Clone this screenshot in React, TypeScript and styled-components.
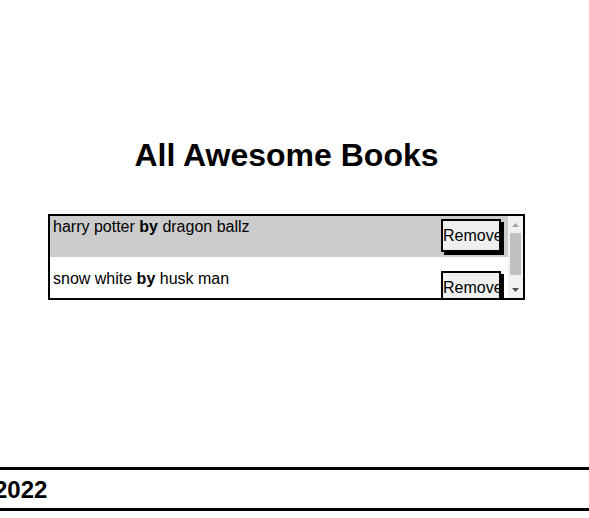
import styled, { createGlobalStyle } from "styled-components";

const GlobalStyle = createGlobalStyle`
  html, body {
    margin: 0;
    padding: 0;
    background: #fff;
    font-family: "Liberation Sans", Arial, sans-serif;
    color: #000;
  }
`;

const Page = styled.div`
  display: flex;
  flex-direction: column;
  height: 100vh;
  overflow: hidden;
`;

const Main = styled.main`
  width: 557px;
  margin-left: 8px;
  padding-top: 137px;
  display: flex;
  flex-direction: column;
  align-items: center;
`;

const Title = styled.h1`
  margin: 0;
  font-size: 32px;
  font-weight: bold;
`;

const BookBox = styled.div`
  margin-top: 40px;
  width: 473px;
  height: 82px;
  border: 2px solid #000;
  display: flex;
`;

const BookList = styled.ul`
  list-style: none;
  margin: 0;
  padding: 0;
  flex: 1;
  overflow-y: auto;
  scrollbar-width: none;
`;

const ScrollBar = styled.div`
  width: 15px;
  display: flex;
  flex-direction: column;
  background: #f1f1f1;
`;

const ScrollArrow = styled.div<{ $down?: boolean }>`
  height: 15px;
  display: flex;
  justify-content: center;
  align-items: ${(p) => (p.$down ? "flex-start" : "flex-end")};
  padding: ${(p) => (p.$down ? "5px 0 0" : "0 0 4px")};
  box-sizing: border-box;
`;

const ScrollTrack = styled.div`
  flex: 1;
  padding: 2px 2px 0;
`;

const ScrollThumb = styled.div`
  height: 42px;
  background: #c1c1c1;
`;

const BookRow = styled.li<{ $shaded: boolean }>`
  display: flex;
  justify-content: space-between;
  align-items: flex-start;
  box-sizing: border-box;
  min-height: 41px;
  margin-bottom: 11px;
  padding: 2px 7px 0 3px;
  background: ${(p) => (p.$shaded ? "#cccccc" : "#fff")};
  font-size: 16px;
`;

const BookText = styled.p`
  margin: 0;
`;

const RemoveButton = styled.button`
  margin-top: 1px;
  width: 60px;
  height: 33px;
  padding: 0;
  border: 2px solid #000;
  box-shadow: 3px 3px 0 #000;
  background: #efefef;
  font-family: "Liberation Sans", Arial, sans-serif;
  font-size: 16px;
  color: #000;
  text-align: left;
  white-space: nowrap;
  overflow: visible;
`;

const Footer = styled.footer`
  margin-top: auto;
  margin-bottom: 7px;
  border-top: 3px solid #000;
  border-bottom: 3px solid #000;
  height: 38px;
  display: flex;
  align-items: center;
`;

const FooterText = styled.h2`
  margin: 2px 0 0 -6px;
  font-size: 24px;
  font-weight: bold;
`;

const books = [
  { title: "harry potter", author: "dragon ballz" },
  { title: "snow white", author: "husk man" },
];

export default function App() {
  return (
    <>
      <GlobalStyle />
      <Page>
        <Main>
          <Title>All Awesome Books</Title>
          <BookBox>
            <BookList>
              {books.map((b, i) => (
                <BookRow key={b.title} $shaded={i % 2 === 0}>
                  <BookText>
                    {b.title} <b>by</b> {b.author}
                  </BookText>
                  <RemoveButton>Remove</RemoveButton>
                </BookRow>
              ))}
            </BookList>
            <ScrollBar>
              <ScrollArrow>
                <svg width="7" height="4" viewBox="0 0 7 4">
                  <path d="M3.5 0 L7 4 L0 4 Z" fill="#a3a3a3" />
                </svg>
              </ScrollArrow>
              <ScrollTrack>
                <ScrollThumb />
              </ScrollTrack>
              <ScrollArrow $down>
                <svg width="7" height="4" viewBox="0 0 7 4">
                  <path d="M0 0 L7 0 L3.5 4 Z" fill="#505050" />
                </svg>
              </ScrollArrow>
            </ScrollBar>
          </BookBox>
        </Main>
        <Footer>
          <FooterText>2022</FooterText>
        </Footer>
      </Page>
    </>
  );
}
